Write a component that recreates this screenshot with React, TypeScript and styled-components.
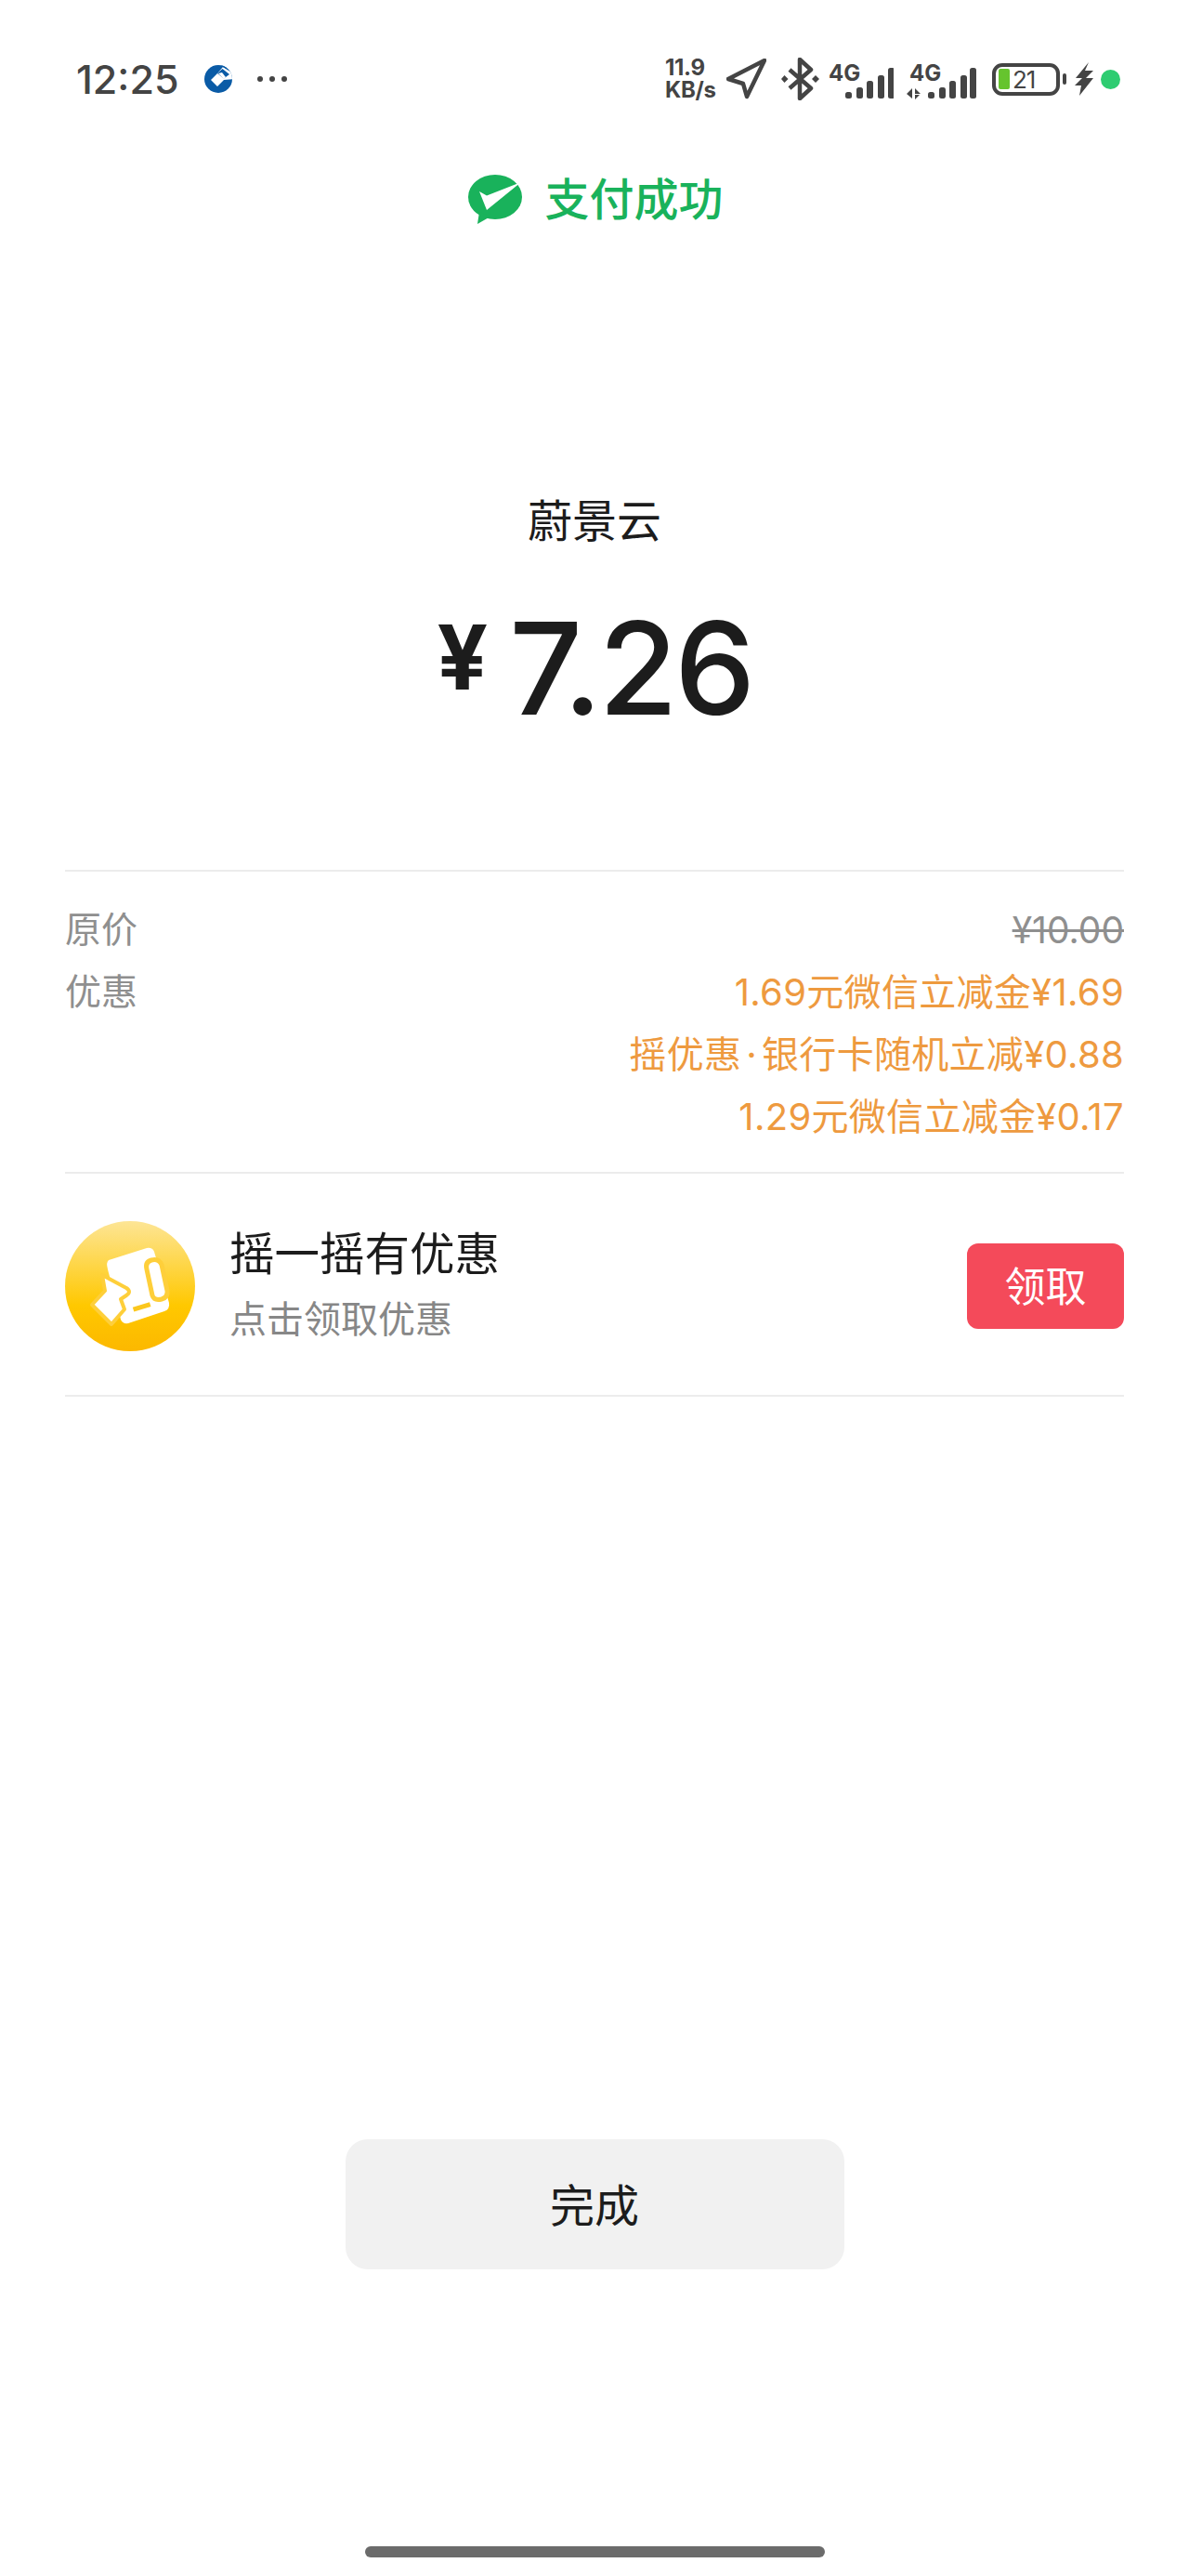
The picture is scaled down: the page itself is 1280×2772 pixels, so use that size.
import React from "react";
import styled, { createGlobalStyle } from "styled-components";

const Global = createGlobalStyle`
  html, body { margin: 0; padding: 0; background: #fff; }
  body { font-family: "Roboto", "Noto Sans CJK SC", sans-serif; }
`;

const Screen = styled.div`
  width: 1280px;
  height: 2772px;
  display: flex;
  flex-direction: column;
  background: #fff;
  overflow: hidden;
`;

const StatusBar = styled.div`
  height: 170px;
  padding: 0 74px 0 82px;
  box-sizing: border-box;
  display: flex;
  align-items: center;
  justify-content: space-between;
  color: #444;
`;

const StatusGroup = styled.div`
  display: flex;
  align-items: center;
`;

const Time = styled.span`
  font-family: "Inter", sans-serif;
  font-size: 43px;
  font-weight: 500;
  line-height: 50px;
  width: 138px;
  color: #444;
`;

const Dots = styled.div`
  display: flex;
  gap: 7px;
  margin-left: 27px;
`;

const Dot = styled.span`
  width: 6px;
  height: 6px;
  border-radius: 50%;
  background: #444;
`;

const Speed = styled.div`
  width: 56px;
  font-family: "Inter", sans-serif;
  font-weight: 700;
  font-size: 24px;
  line-height: 24px;
  text-align: left;
  margin-right: 10px;
  white-space: nowrap;
  letter-spacing: -0.3px;
`;

const StatusIcon = styled.svg<{ $gap: number }>`
  display: block;
  margin-right: ${(p) => p.$gap}px;
  flex: none;
`;

const Battery = styled.div`
  width: 73px;
  height: 35px;
  box-sizing: border-box;
  border: 4px solid #444;
  border-radius: 11px;
  display: flex;
  align-items: center;
  padding-left: 3px;
  gap: 3px;
`;

const BatteryFill = styled.div`
  width: 12px;
  height: 22px;
  background: #66c42e;
  border-radius: 2px;
`;

const BatteryText = styled.span`
  font-family: "Inter", sans-serif;
  font-size: 26px;
  line-height: 27px;
  letter-spacing: -1px;
  color: #444;
`;

const BatteryNib = styled.div`
  width: 4px;
  height: 12px;
  background: #444;
  border-radius: 2px;
  margin: 0 9px 0 3px;
`;

const GreenDot = styled.div`
  width: 21px;
  height: 21px;
  border-radius: 50%;
  background: #2ecc71;
`;

const PayTitle = styled.div`
  height: 88px;
  display: flex;
  align-items: center;
  justify-content: center;
  gap: 24px;
  padding-left: 3px;
  color: #19b25b;
  font-family: "Noto Sans CJK SC", sans-serif;
  font-size: 48px;
  font-weight: 500;
`;

const PayLabel = styled.span`
  margin-bottom: 6px;
`;

const Merchant = styled.div`
  margin-top: 269px;
  height: 60px;
  line-height: 60px;
  text-align: center;
  font-family: "Noto Sans CJK SC", sans-serif;
  font-size: 48px;
  color: #1c1c1c;
`;

const Amount = styled.div`
  margin-top: 57px;
  height: 150px;
  display: flex;
  align-items: baseline;
  justify-content: center;
  color: #1c1c1c;
  font-family: "Inter", sans-serif;
  line-height: 150px;
`;

const Yen = styled.span`
  font-size: 96px;
  font-weight: 700;
  margin-right: 23px;
  position: relative;
  top: -27px;
`;

const Figure = styled.span`
  font-size: 138px;
  font-weight: 550;
  letter-spacing: -3.5px;
`;

const Details = styled.div`
  margin: 142px 70px 0;
  padding: 29px 0 26px;
  border-top: 2px solid #ececec;
  border-bottom: 2px solid #ececec;
  font-family: "Noto Sans CJK SC", sans-serif;
  font-size: 39px;
  line-height: 67px;
`;

const DetailRow = styled.div`
  display: flex;
  justify-content: space-between;
`;

const Label = styled.span`
  color: #8f8f8f;
  margin-top: -3px;
`;

const Values = styled.div`
  display: flex;
  flex-direction: column;
  align-items: flex-end;
`;

const Original = styled.span`
  color: #8f8f8f;
  text-decoration: line-through;
  font-family: "Inter", sans-serif;
  font-size: 39px;
`;

const Discount = styled.span`
  color: #ee9a3f;
  font-family: "Inter", "Noto Sans CJK SC", sans-serif;
  font-size: 40px;
  letter-spacing: 0.3px;
`;

const Separator = styled.span`
  margin: 0 5px;
`;

const Coupon = styled.div`
  margin: 0 70px;
  height: 240px;
  padding-top: 3px;
  box-sizing: border-box;
  display: flex;
  align-items: center;
  border-bottom: 2px solid #ececec;
`;

const CouponIcon = styled.svg`
  display: block;
  flex: none;
`;

const CouponText = styled.div`
  flex: 1;
  margin: 0 0 9px 37px;
  display: flex;
  flex-direction: column;
  font-family: "Noto Sans CJK SC", sans-serif;
`;

const CouponTitle = styled.span`
  font-size: 48.5px;
  line-height: 62px;
  color: #1c1c1c;
`;

const CouponSub = styled.span`
  font-size: 40px;
  line-height: 52px;
  margin-top: 14px;
  color: #878787;
`;

const ClaimButton = styled.button`
  width: 169px;
  height: 92px;
  border: 0;
  padding: 0 0 4px;
  border-radius: 12px;
  background: #f44a5a;
  color: #fff;
  font-family: "Noto Sans CJK SC", sans-serif;
  font-size: 44px;
`;

const Footer = styled.div`
  flex: 1;
  display: flex;
  flex-direction: column;
  align-items: center;
  justify-content: space-between;
  padding: 799px 0 20px;
`;

const DoneButton = styled.button`
  width: 537px;
  height: 140px;
  border: 0;
  padding: 0 0 4px;
  border-radius: 24px;
  background: #f1f1f1;
  color: #1c1c1c;
  font-family: "Noto Sans CJK SC", sans-serif;
  font-size: 48px;
`;

const HomeBar = styled.div`
  width: 495px;
  height: 12px;
  border-radius: 6px;
  background: #6b6b6b;
`;

const CcbLogo = () => (
  <StatusIcon $gap={0} width="30" height="30" viewBox="0 0 30 30">
    <defs>
      <clipPath id="ccb">
        <circle cx="15" cy="15" r="15" />
      </clipPath>
    </defs>
    <g clipPath="url(#ccb)">
      <rect width="30" height="30" fill="#0a5ba6" />
      <path d="M7 16 L14 9 L20 2 L32 9 L32 15 L21 16 L14 23 Z" fill="#fff" />
      <path d="M20 -1 L32 7 L32 9.5 L18 1 Z" fill="#0a5ba6" />
      <path d="M14 9 L19.5 4 L27 10 L21 14.5 Z" fill="#0a5ba6" />
      <path d="M15 9 L21 15 L23 13 L19 8 Z" fill="#fff" />
    </g>
  </StatusIcon>
);

const SignalBars = ({ xs }: { xs: number[] }) => {
  const tops = [30, 25, 18, 12, 4];
  return (
    <>
      {xs.map((x, i) => (
        <rect key={x} x={x} y={tops[i]} width="7" height={37 - tops[i]} rx="2.5" fill="#444" />
      ))}
    </>
  );
};

const SvgLabel = styled.text`
  font-family: "Inter", sans-serif;
  font-weight: 700;
  font-size: 24px;
  fill: #444;
`;

export default function App() {
  return (
    <Screen>
      <Global />
      <StatusBar>
        <StatusGroup>
          <Time>12:25</Time>
          <CcbLogo />
          <Dots>
            <Dot />
            <Dot />
            <Dot />
          </Dots>
        </StatusGroup>
        <StatusGroup>
          <Speed>
            11.9
            <br />
            KB/s
          </Speed>
          <StatusIcon $gap={16} width="43" height="44" viewBox="0 0 43 44">
            <path d="M41 2 L2 22 L18 27 L22 41 Z" fill="none" stroke="#444" strokeWidth="4.5" strokeLinejoin="round" />
          </StatusIcon>
          <StatusIcon $gap={10} width="41" height="46" viewBox="0 0 41 46">
            <path d="M9 13 L32 33 L20 44 L20 2 L32 13 L9 33" fill="none" stroke="#444" strokeWidth="4.5" strokeLinejoin="round" />
            <path d="M3.5 19 L7.5 23 L3.5 27 L0 23 Z M37 19 L41 23 L37 27 L33 23 Z" fill="#444" />
          </StatusIcon>
          <StatusIcon $gap={14} width="70" height="48" viewBox="0 -8 70 48">
            <SvgLabel x="0" y="18">4G</SvgLabel>
            <SignalBars xs={[18, 30, 41, 53, 64]} />
          </StatusIcon>
          <StatusIcon $gap={17} width="75" height="48" viewBox="0 -8 75 48">
            <SvgLabel x="3" y="18">4G</SvgLabel>
            <path d="M6 26 L6 37 L0 32 Z M9 26 L15 32 L9 32 Z M9 33 L14 33 L9 38 Z" fill="#444" />
            <SignalBars xs={[23, 35, 46, 58, 68]} />
          </StatusIcon>
          <Battery>
            <BatteryFill />
            <BatteryText>21</BatteryText>
          </Battery>
          <BatteryNib />
          <StatusIcon $gap={8} width="20" height="36" viewBox="0 0 20 36">
            <path d="M15 0 L1 17 L8 17 L0 25 L7 25 L5 36 L20 17 L12 17 L20 9 L11 9 Z" fill="#444" />
          </StatusIcon>
          <GreenDot />
        </StatusGroup>
      </StatusBar>

      <PayTitle>
        <svg width="58" height="53" viewBox="0 0 58 53">
          <ellipse cx="29" cy="24" rx="29" ry="24" fill="#19b25b" />
          <path d="M12 40 L10 53 L24 45 Z" fill="#19b25b" />
          <path d="M12 18 L20 22.5 L57 8 L20 38 Z" fill="#fff" />
        </svg>
        <PayLabel>支付成功</PayLabel>
      </PayTitle>

      <Merchant>蔚景云</Merchant>
      <Amount>
        <Yen>¥</Yen>
        <Figure>7.26</Figure>
      </Amount>

      <Details>
        <DetailRow>
          <Label>原价</Label>
          <Original>¥10.00</Original>
        </DetailRow>
        <DetailRow>
          <Label>优惠</Label>
          <Values>
            <Discount>1.69元微信立减金¥1.69</Discount>
            <Discount>
              摇优惠<Separator>·</Separator>银行卡随机立减¥0.88
            </Discount>
            <Discount>1.29元微信立减金¥0.17</Discount>
          </Values>
        </DetailRow>
      </Details>

      <Coupon>
        <CouponIcon width="140" height="140" viewBox="0 0 140 140">
          <defs>
            <linearGradient id="coupon" x1="0" y1="0" x2="0" y2="1">
              <stop offset="0" stopColor="#fde595" />
              <stop offset="0.65" stopColor="#ffc800" />
              <stop offset="1" stopColor="#fcb800" />
            </linearGradient>
          </defs>
          <circle cx="70" cy="70" r="70" fill="url(#coupon)" />
          <path d="M47 42 L88 29 Q94 28 96 33 L112 88 Q113 95 107 97 L68 110 Q62 111 60 106 L46 52 Q44 44 47 42 Z" fill="#fff" />
          <path d="M88 52 Q86 44 93 42 Q101 40 104 47 L110 75 Q111 82 104 84 Q96 86 94 80 Z" fill="#fff" stroke="#fecf3a" strokeWidth="5" />
          <path d="M40 58 L66 72 Q72 76 66 80 L60 84 L64 95 L50 111 L29 90 L43 75 Z" fill="#fff" stroke="#fecf3a" strokeWidth="4" strokeLinejoin="round" />
          <rect x="73" y="90" width="19" height="5" fill="#fbc71d" transform="rotate(-17 82 92)" />
        </CouponIcon>
        <CouponText>
          <CouponTitle>摇一摇有优惠</CouponTitle>
          <CouponSub>点击领取优惠</CouponSub>
        </CouponText>
        <ClaimButton>领取</ClaimButton>
      </Coupon>

      <Footer>
        <DoneButton>完成</DoneButton>
        <HomeBar />
      </Footer>
    </Screen>
  );
}
